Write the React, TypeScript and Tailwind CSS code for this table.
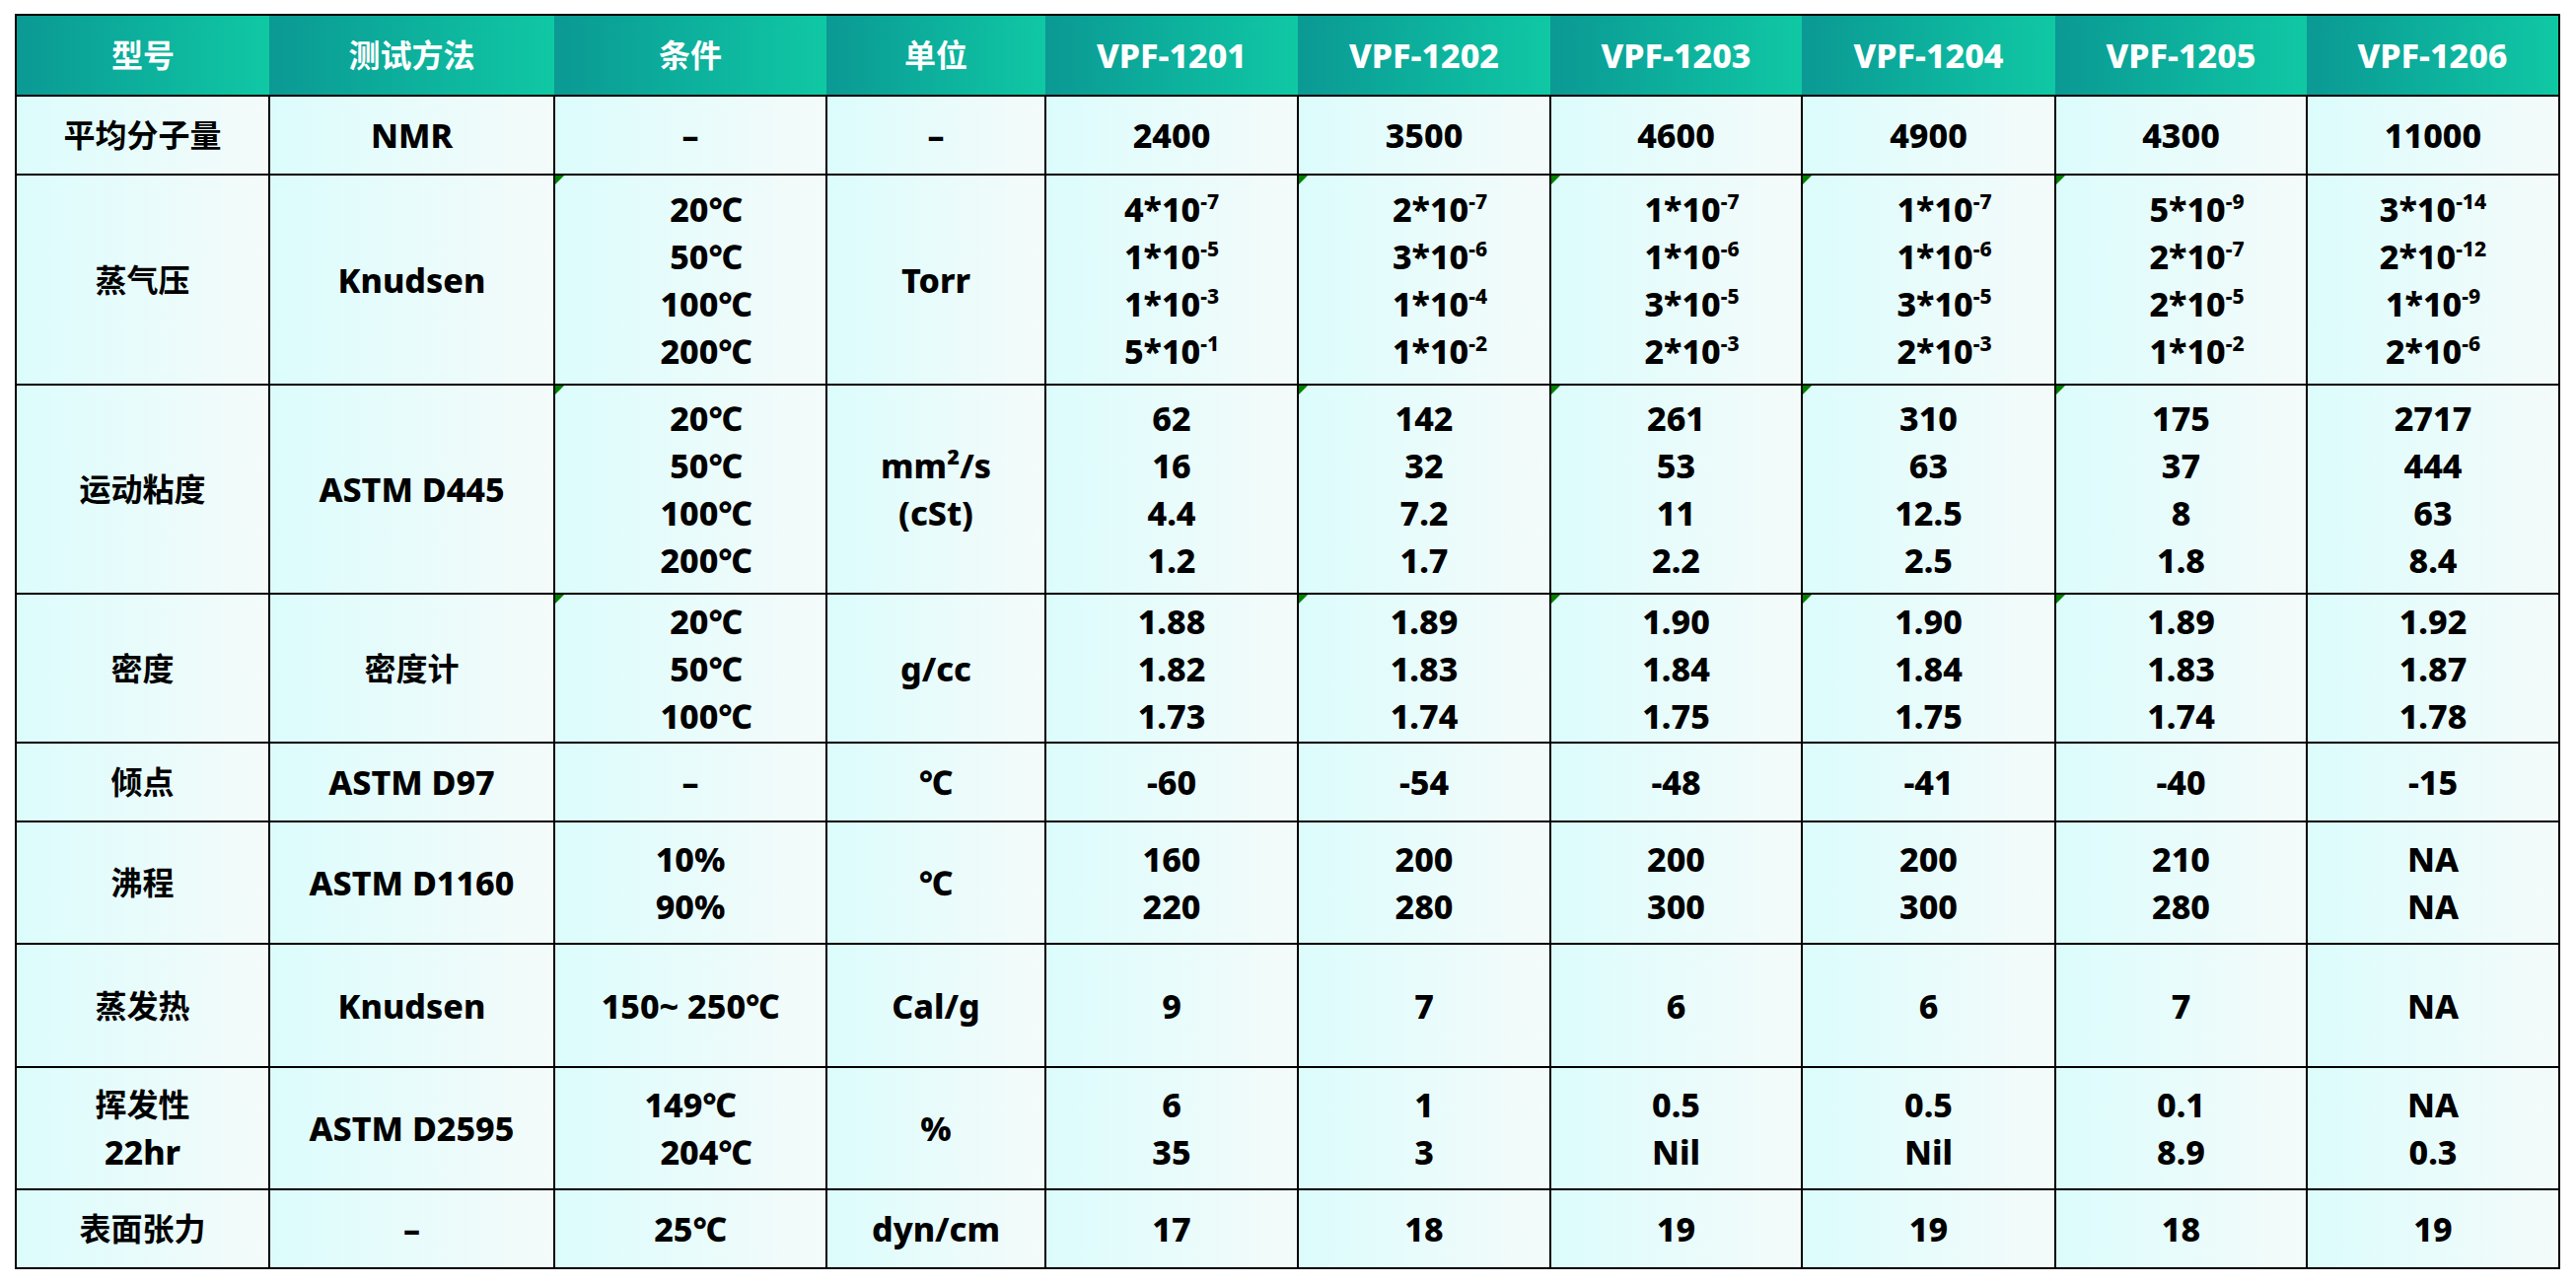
import React from 'react';

type Cell = {
    lines: React.ReactNode[];
    tri?: boolean;   // small green marker in the top-left corner
    shift?: boolean; // content sits a little right of centre
};

type Row = {
    height: string;
    cells: Cell[];
};

const sci = (m: string, e: string) => (
    <>
        {m}*10<sup className="text-[21px] -top-[13px]">{e}</sup>
    </>
);

const c = (lines: React.ReactNode[] | React.ReactNode, opts: Partial<Cell> = {}): Cell => ({
    lines: Array.isArray(lines) ? lines : [lines],
    ...opts,
});

// chinese text is a touch smaller than the latin text in the source sheet
const isCjk = (n: React.ReactNode) => typeof n === 'string' && /[\u4e00-\u9fff]/.test(n);
const sizeOf = (n: React.ReactNode) => (isCjk(n) ? 'text-[32px] font-bold' : 'text-[34px] font-extrabold');

const temps4 = ['20℃', '50℃', '100℃', '200℃'];
const temps3 = ['20℃', '50℃', '100℃'];

const headers = ['型号', '测试方法', '条件', '单位', 'VPF-1201', 'VPF-1202', 'VPF-1203', 'VPF-1204', 'VPF-1205', 'VPF-1206'];
const colWidths = ['w-[257px]', 'w-[289px]', 'w-[276px]', 'w-[222px]', 'w-[256px]', 'w-[256px]', 'w-[255px]', 'w-[257px]', 'w-[255px]', 'w-[256px]'];

const rows: Row[] = [
    {
        height: 'h-[80px]',
        cells: [c('平均分子量'), c('NMR'), c('–'), c('–'), c('2400'), c('3500'), c('4600'), c('4900'), c('4300'), c('11000')],
    },
    {
        height: 'h-[213px]',
        cells: [
            c('蒸气压'),
            c('Knudsen'),
            c(temps4, { tri: true, shift: true }),
            c('Torr'),
            c([sci('4', '-7'), sci('1', '-5'), sci('1', '-3'), sci('5', '-1')]),
            c([sci('2', '-7'), sci('3', '-6'), sci('1', '-4'), sci('1', '-2')], { tri: true, shift: true }),
            c([sci('1', '-7'), sci('1', '-6'), sci('3', '-5'), sci('2', '-3')], { tri: true, shift: true }),
            c([sci('1', '-7'), sci('1', '-6'), sci('3', '-5'), sci('2', '-3')], { tri: true, shift: true }),
            c([sci('5', '-9'), sci('2', '-7'), sci('2', '-5'), sci('1', '-2')], { tri: true, shift: true }),
            c([sci('3', '-14'), sci('2', '-12'), sci('1', '-9'), sci('2', '-6')]),
        ],
    },
    {
        height: 'h-[212px]',
        cells: [
            c('运动粘度'),
            c('ASTM D445'),
            c(temps4, { tri: true, shift: true }),
            c(['mm²/s', '(cSt)']),
            c(['62', '16', '4.4', '1.2']),
            c(['142', '32', '7.2', '1.7'], { tri: true }),
            c(['261', '53', '11', '2.2'], { tri: true }),
            c(['310', '63', '12.5', '2.5'], { tri: true }),
            c(['175', '37', '8', '1.8'], { tri: true }),
            c(['2717', '444', '63', '8.4']),
        ],
    },
    {
        height: 'h-[151px]',
        cells: [
            c('密度'),
            c('密度计'),
            c(temps3, { tri: true, shift: true }),
            c('g/cc'),
            c(['1.88', '1.82', '1.73']),
            c(['1.89', '1.83', '1.74'], { tri: true }),
            c(['1.90', '1.84', '1.75'], { tri: true }),
            c(['1.90', '1.84', '1.75'], { tri: true }),
            c(['1.89', '1.83', '1.74'], { tri: true }),
            c(['1.92', '1.87', '1.78']),
        ],
    },
    {
        height: 'h-[80px]',
        cells: [c('倾点'), c('ASTM D97'), c('–'), c('℃'), c('-60'), c('-54'), c('-48'), c('-41'), c('-40'), c('-15')],
    },
    {
        height: 'h-[124px]',
        cells: [
            c('沸程'),
            c('ASTM D1160'),
            c(['10%', '90%']),
            c('℃'),
            c(['160', '220']),
            c(['200', '280']),
            c(['200', '300']),
            c(['200', '300']),
            c(['210', '280']),
            c(['NA', 'NA']),
        ],
    },
    {
        height: 'h-[125px]',
        cells: [c('蒸发热'), c('Knudsen'), c('150~ 250℃'), c('Cal/g'), c('9'), c('7'), c('6'), c('6'), c('7'), c('NA')],
    },
    {
        height: 'h-[124px]',
        cells: [
            c(['挥发性', '22hr']),
            c('ASTM D2595'),
            c(['149℃', <span className="pl-[32px]">204℃</span>]),
            c('%'),
            c(['6', '35']),
            c(['1', '3']),
            c(['0.5', 'Nil']),
            c(['0.5', 'Nil']),
            c(['0.1', '8.9']),
            c(['NA', '0.3']),
        ],
    },
    {
        height: 'h-[80px]',
        cells: [c('表面张力'), c('–'), c('25℃'), c('dyn/cm'), c('17'), c('18'), c('19'), c('19'), c('18'), c('19')],
    },
];

function BodyCell({ cell }: { cell: Cell }) {
    return (
        <td className="relative p-0 border-2 border-black bg-linear-to-r from-[#dcfcfc] to-[#f4fbfa] text-center align-middle">
            {cell.tri && (
                <span className="absolute left-0 top-0 w-[9px] h-[9px] bg-[#008000] [clip-path:polygon(0_0,100%_0,0_100%)]" />
            )}
            <div className={cell.shift ? 'pl-[32px]' : ''}>
                {cell.lines.map((line, i) => (
                    <div key={i} className={`leading-[48px] whitespace-nowrap ${sizeOf(line)}`}>
                        {line}
                    </div>
                ))}
            </div>
        </td>
    );
}

export default function App() {
    return (
        <div className="min-h-screen bg-white pl-[15px] pt-[14px] font-['Noto_Sans','Noto_Sans_CJK_SC',sans-serif] text-black">
            <table className="border-collapse table-fixed">
                <colgroup>
                    {colWidths.map((w, i) => (
                        <col key={i} className={w} />
                    ))}
                </colgroup>
                <thead>
                    <tr className="h-[82px]">
                        {headers.map((h, i) => (
                            <th
                                key={h}
                                className={`p-0 text-white text-center align-middle border-y-2 border-black bg-linear-to-r from-[#0b9994] to-[#10c8a4] ${sizeOf(h)} ${
                                    i === 0 ? 'border-l-2' : ''
                                } ${i === headers.length - 1 ? 'border-r-2' : ''}`}
                            >
                                {h}
                            </th>
                        ))}
                    </tr>
                </thead>
                <tbody>
                    {rows.map((row, r) => (
                        <tr key={r} className={row.height}>
                            {row.cells.map((cell, i) => (
                                <BodyCell key={i} cell={cell} />
                            ))}
                        </tr>
                    ))}
                </tbody>
            </table>
        </div>
    );
}
